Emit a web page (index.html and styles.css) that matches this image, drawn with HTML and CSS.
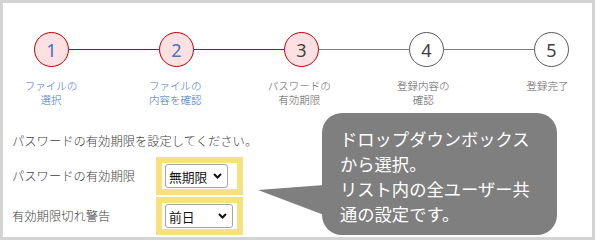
FILE: index.html
```html
<!DOCTYPE html>
<html lang="ja">
<head>
  <meta charset="UTF-8">
  <title>パスワードの有効期限</title>
  <link rel="stylesheet" href="styles.css">
</head>
<body>
  <div class="frame">
    <!-- Steps -->
    <div class="track">
      <span class="step done">1</span>
      <span class="bar done"></span>
      <span class="step done">2</span>
      <span class="bar done"></span>
      <span class="step current">3</span>
      <span class="bar"></span>
      <span class="step">4</span>
      <span class="bar"></span>
      <span class="step">5</span>
    </div>
    <div class="labels">
      <div class="label done">ファイルの<br>選択</div>
      <div class="label done">ファイルの<br>内容を確認</div>
      <div class="label">パスワードの<br>有効期限</div>
      <div class="label">登録内容の<br>確認</div>
      <div class="label">登録完了</div>
    </div>

    <!-- Form -->
    <p class="intro">パスワードの有効期限を設定してください。</p>
    <div class="form">
      <span class="field-label">パスワードの有効期限</span>
      <div class="mark">
        <div class="select w-short">
          <span>無期限</span>
          <svg width="9" height="6" viewBox="0 0 9 6"><path d="M1 1 L4.5 4.5 L8 1" fill="none" stroke="#111" stroke-width="2"/></svg>
        </div>
      </div>
      <span class="field-label">有効期限切れ警告</span>
      <div class="mark">
        <div class="select w-long">
          <span>前日</span>
          <svg width="9" height="6" viewBox="0 0 9 6"><path d="M1 1 L4.5 4.5 L8 1" fill="none" stroke="#111" stroke-width="2"/></svg>
        </div>
      </div>
    </div>

    <!-- Callout -->
    <div class="callout">
      <svg class="tail" width="66" height="32" viewBox="0 0 66 32"><polygon points="0,6 66,1 66,31" fill="#7f7f7f"/></svg>
      ドロップダウンボックス<br>から選択。<br>リスト内の全ユーザー共<br>通の設定です。
    </div>
  </div>
</body>
</html>
```

FILE: styles.css
```css
* {
  margin: 0;
  padding: 0;
  box-sizing: border-box;
}

body {
  font-family: "Noto Sans CJK JP", "Noto Sans", sans-serif;
  font-weight: 300;
  background-color: #ffffff;
  color: #404040;
}

.frame {
  position: relative;
  width: 595px;
  height: 240px;
  border: 3px solid #d4d4d4;
  overflow: hidden;
}

/* Steps */
.track {
  display: flex;
  align-items: center;
  margin: 29px 0 0 31px;
}

.step {
  width: 35px;
  height: 35px;
  border-radius: 50%;
  border: 1.5px solid #595959;
  display: flex;
  align-items: center;
  justify-content: center;
  font-family: "Noto Sans", sans-serif;
  font-size: 18px;
  font-weight: 400;
  line-height: 1;
  color: #404040;
  background-color: #ffffff;
}

.step.done,
.step.current {
  border-color: #c00000;
  background-color: #fde0e1;
}

.step.done {
  color: #4472c4;
}

.bar {
  width: 90px;
  height: 1px;
  background-color: #7f7f7f;
}

.bar.done {
  height: 1.5px;
  background-color: #c00000;
}

.labels {
  display: flex;
  gap: 35px;
  margin: 12px 0 0 3.5px;
}

.label {
  width: 90px;
  text-align: center;
  font-size: 10.5px;
  line-height: 14px;
  color: #595959;
}

.label.done {
  color: #4472c4;
}

/* Form */
.intro {
  margin: 26px 0 0 9px;
  font-size: 12.3px;
  line-height: 17px;
}

.form {
  display: grid;
  grid-template-columns: 144px 87px;
  row-gap: 2px;
  align-items: center;
  margin: 7px 0 0 9px;
}

.field-label {
  font-size: 12.3px;
  line-height: 17px;
}

.mark {
  height: 38px;
  border: 6px solid #f6e27c;
  padding-left: 3px;
  display: flex;
  align-items: center;
}

.select {
  height: 24px;
  border: 1px solid #a6a6a6;
  border-radius: 3px;
  background-color: #ffffff;
  display: flex;
  align-items: center;
  justify-content: space-between;
  padding: 0 5px 0 3px;
  font-size: 12.8px;
  font-weight: 400;
  color: #111;
}

.w-short {
  width: 63px;
}

.w-long {
  width: 68px;
}

/* Callout */
.callout {
  position: absolute;
  left: 319px;
  top: 110px;
  width: 235px;
  height: 122px;
  border-radius: 20px;
  background-color: #7f7f7f;
  color: #ffffff;
  padding: 13px 8px 0 18px;
  font-size: 17.3px;
  font-weight: 400;
  line-height: 25px;
}

.callout .tail {
  position: absolute;
  left: -64px;
  top: 71px;
}
```
